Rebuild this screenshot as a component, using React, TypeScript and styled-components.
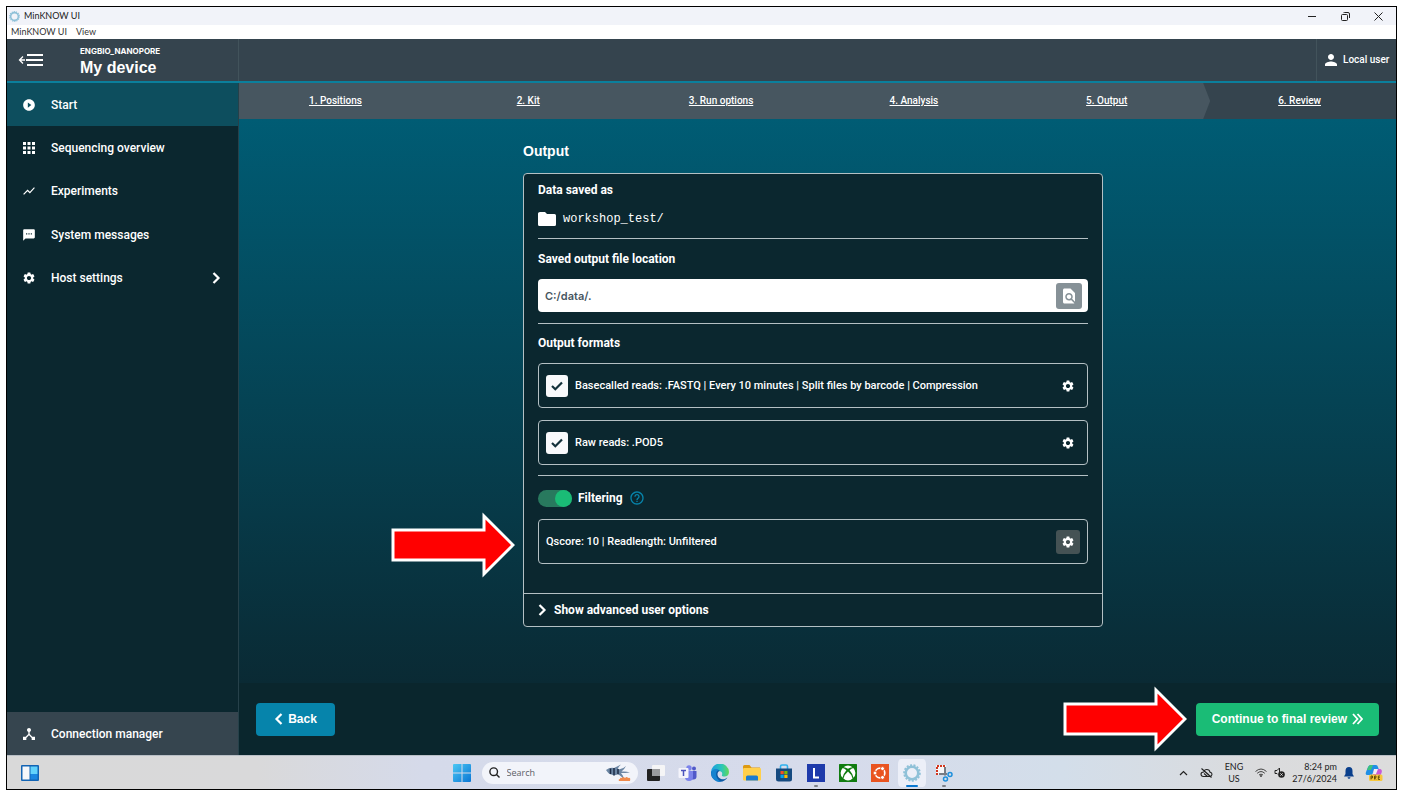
import React, { useState } from "react";
import styled, { createGlobalStyle } from "styled-components";
import {
  MdApps,
  MdDeviceHub,
  MdFindInPage,
  MdHelpOutline,
  MdPerson,
  MdPlayCircleFilled,
  MdSettings,
  MdShowChart,
  MdSms,
} from "react-icons/md";

const ui = 'Roboto, "Liberation Sans", sans-serif';
const bold = '"Liberation Sans", Arial, sans-serif';
const system = '"Open Sans", "Noto Sans", sans-serif';

const ink = "#0b272f";
const slate = "#35444e";
const line = "#b4c0c4";

const Global = createGlobalStyle`
  *, *::before, *::after { box-sizing: border-box; }
  body { margin: 0; background: #fff; font-family: ${ui}; color: #fff; }
  button, input { font: inherit; color: inherit; border: 0; padding: 0; margin: 0; background: none; }
  button { cursor: pointer; }
  a { color: inherit; }
  svg { display: block; flex: none; }
  h1, h2, p, ul { margin: 0; padding: 0; }
`;

const Page = styled.div`
  min-height: 100vh;
  padding: 6px 5px 0 6px;
  display: flex;
`;

const Window = styled.div`
  flex: 1;
  min-width: 0;
  display: flex;
  flex-direction: column;
  border: 1px solid #000;
`;

/* Window chrome */

const TitleBar = styled.header`
  height: 18px;
  display: flex;
  align-items: center;
  gap: 4px;
  padding-left: 2px;
  background: #f1f3f9;
  color: #222;
  font: 400 9px/12px Lato, ${system};
`;

const WindowButtons = styled.div`
  margin-left: auto;
  padding-right: 12px;
  display: flex;
  gap: 21px;
`;

const WindowButton = styled.button`
  width: 12px;
  height: 12px;
  display: grid;
  place-items: center;
`;

const MenuBar = styled.nav`
  height: 14px;
  display: flex;
  align-items: center;
  gap: 9px;
  padding-left: 4px;
  background: #fff;
  color: #333;
  font: 400 9px/12px Lato, ${system};
`;

/* Application */

const AppHeader = styled.header`
  height: 44px;
  display: flex;
  background: ${slate};
  border-bottom: 2px solid #0b7f9c;
`;

const Device = styled.div`
  width: 232px;
  display: flex;
  align-items: center;
  gap: 36px;
  padding-left: 11px;
  border-right: 1px solid #42535b;
`;

const DeviceHost = styled.p`
  margin-top: 2px;
  font: 700 8px/10px Inter, ${bold};
`;

const DeviceName = styled.h1`
  margin-top: 3px;
  font: 700 16px/18px ${bold};
`;

const UserButton = styled.button`
  margin-left: auto;
  width: 80px;
  display: flex;
  align-items: center;
  gap: 3px;
  padding-left: 5px;
  border-left: 1px solid #42535b;
  font: 500 10px/14px ${ui};
  white-space: nowrap;
`;

const Body = styled.div`
  flex: 1;
  display: flex;
`;

const Sidebar = styled.nav`
  width: 232px;
  display: flex;
  flex-direction: column;
  justify-content: space-between;
  background: ${ink};
  border-right: 1px solid #26414a;
`;

const NavList = styled.ul`
  list-style: none;
  height: 217px;
  display: grid;
  grid-auto-rows: 1fr;
`;

const NavLink = styled.a<{ $tone?: string }>`
  height: 100%;
  min-height: 43px;
  display: flex;
  align-items: center;
  gap: 15px;
  padding: 0 17px 0 15px;
  background: ${(p) => p.$tone ?? "transparent"};
  font: 500 12px/16px ${ui};
  text-decoration: none;
`;

const NavIcon = styled.span`
  width: 14px;
  display: grid;
  place-content: center;
`;

const NavText = styled.span`
  flex: 1;
`;

const Main = styled.main`
  flex: 1;
  min-width: 0;
  display: flex;
  flex-direction: column;
`;

const Steps = styled.ol`
  list-style: none;
  margin: 0;
  padding: 0;
  height: 36px;
  display: grid;
  grid-template-columns: repeat(6, 1fr);
  background: #475660;
`;

const Step = styled.li<{ $current?: boolean }>`
  display: grid;
  place-items: center;
  font: 500 10px/14px ${ui};
  background: ${(p) => (p.$current ? slate : "transparent")};
  clip-path: ${(p) => (p.$current ? "polygon(0 0, 100% 0, 100% 100%, 0 100%, 7px 50%)" : "none")};
`;

const Stage = styled.div`
  flex: 1;
  padding: 23px 9px 56px 0;
  background: linear-gradient(#005c74, #0a2a34);
`;

const Content = styled.div`
  width: 580px;
  max-width: 100%;
  margin: 0 auto;
`;

const PageTitle = styled.h2`
  font: 700 14px/18px ${bold};
`;

const Panel = styled.section`
  position: relative;
  margin-top: 13px;
  background: ${ink};
  border: 1px solid ${line};
  border-radius: 4px;
`;

const Group = styled.div<{ $top: number; $bottom: number }>`
  margin: 0 14px;
  padding: ${(p) => p.$top}px 0 ${(p) => p.$bottom}px;
  & + & { border-top: 1px solid ${line}; }
`;

const GroupTitle = styled.h2`
  display: block;
  font: 700 12px/16px ${ui};
`;

const FolderRow = styled.p`
  margin-top: 11px;
  height: 20px;
  display: flex;
  align-items: center;
  gap: 6px;
  font: 400 12px/16px "Liberation Mono", monospace;
`;

const PathField = styled.div`
  margin-top: 12px;
  height: 33px;
  display: flex;
  align-items: center;
  padding: 0 6px 0 7px;
  background: #fff;
  border-radius: 4px;
`;

const PathInput = styled.input`
  flex: 1;
  min-width: 0;
  color: #47565f;
  font: 600 11px/16px Inter, ${ui};
  outline: none;
`;

const BrowseButton = styled.button`
  width: 26px;
  height: 26px;
  display: grid;
  place-items: center;
  background: #869197;
  border-radius: 3px;
`;

const OptionBox = styled.div`
  margin-top: 12px;
  height: 45px;
  display: flex;
  align-items: center;
  gap: 7px;
  padding: 0 7px;
  border: 1px solid ${line};
  border-radius: 4px;
  font: 500 11px/16px ${ui};
`;

const OptionText = styled.label`
  flex: 1;
  white-space: nowrap;
`;

const CheckHolder = styled.span`
  display: grid;
  place-items: center;
  & > * { grid-area: 1 / 1; }
  & > svg { pointer-events: none; }
`;

const CheckInput = styled.input`
  appearance: none;
  width: 22px;
  height: 22px;
  background: #f8f9fb;
  border-radius: 3px;
`;

const GearButton = styled.button<{ $active?: boolean }>`
  width: 24px;
  height: 24px;
  display: grid;
  place-items: center;
  background: ${(p) => (p.$active ? "#455254" : "transparent")};
  border-radius: 3px;
`;

const FilterRow = styled.div`
  height: 18px;
  display: flex;
  align-items: center;
  gap: 6px;
  font: 700 12px/16px ${ui};
`;

const Switch = styled.input`
  appearance: none;
  width: 34px;
  height: 17px;
  display: flex;
  justify-content: flex-end;
  border-radius: 9px;
  background: #28795e;
  &:not(:checked) { justify-content: flex-start; background: #475660; }
  &::before {
    content: "";
    width: 17px;
    height: 17px;
    border-radius: 50%;
    background: #1abc76;
  }
`;

const HelpButton = styled.button`
  color: #0784ab;
`;

const AdvancedButton = styled.button`
  width: 100%;
  height: 33px;
  display: flex;
  align-items: center;
  gap: 7px;
  padding-left: 14px;
  border-top: 1px solid ${line};
  font: 700 12px/16px ${ui};
`;

const Footer = styled.footer`
  height: 72px;
  display: flex;
  justify-content: space-between;
  align-items: center;
  padding: 0 17px;
  background: #0a262d;
`;

const ActionButton = styled.button<{ $tone: string }>`
  position: relative;
  min-width: 79px;
  height: 33px;
  display: flex;
  align-items: center;
  justify-content: center;
  gap: 5px;
  padding: 0 16px;
  background: ${(p) => p.$tone};
  border-radius: 4px;
  font: 700 12px/16px ${bold};
`;

const Callout = styled.svg`
  position: absolute;
  right: calc(100% + 9px);
  pointer-events: none;
`;

const PanelCallout = styled(Callout)`
  top: 338px;
`;

const ButtonCallout = styled(Callout)`
  top: -17px;
`;

/* Taskbar */

const Taskbar = styled.footer`
  height: 34px;
  display: grid;
  grid-template-columns: 1fr auto 1fr;
  align-items: center;
  border-top: 1px solid #b9bfc6;
  background: linear-gradient(90deg, #d9d9d9 0, #d9d9da 18%, #d5daea 30%, #d6dbeb 60%, #d3deea 76%, #dadbdd 90%, #dcdcdc);
  color: #222;
  font: 400 9px/12px Lato, ${system};
`;

const WidgetSlot = styled.button`
  width: 46px;
  display: grid;
  place-items: center;
`;

const Dock = styled.div`
  display: flex;
  align-items: center;
`;

const DockButton = styled.button<{ $w?: number; $active?: boolean; $running?: boolean }>`
  position: relative;
  width: ${(p) => p.$w ?? 32}px;
  height: 28px;
  display: grid;
  place-items: center;
  background-clip: content-box;
  padding: 0 2px;
  border-radius: 5px;
  background-color: ${(p) => (p.$active ? "#eceff8" : "transparent")};
  &::after {
    content: "";
    display: ${(p) => (p.$active || p.$running ? "block" : "none")};
    position: absolute;
    bottom: 0;
    left: 50%;
    width: ${(p) => (p.$active ? 12 : 4)}px;
    height: 2px;
    border-radius: 1px;
    background: ${(p) => (p.$active ? "#0a78d0" : "#7c8088")};
    transform: translateX(-50%);
  }
`;

const SearchBox = styled.label`
  width: 156px;
  height: 22px;
  margin: 0 2px;
  display: flex;
  align-items: center;
  gap: 7px;
  padding: 0 5px 0 7px;
  background: #f2f4fa;
  border-radius: 11px;
`;

const SearchInput = styled.input`
  flex: 1;
  min-width: 0;
  font: 400 9px/14px ${system};
  outline: none;
  &::placeholder { color: #5c5f66; opacity: 1; }
`;

const Tray = styled.div`
  justify-self: end;
  display: flex;
  align-items: center;
  padding-right: 8px;
`;

const TrayButton = styled.button<{ $w: number }>`
  width: ${(p) => p.$w}px;
  height: 24px;
  display: grid;
  place-items: center;
`;

const TrayText = styled.div<{ $align: string; $w: number }>`
  width: ${(p) => p.$w}px;
  text-align: ${(p) => p.$align};
  white-space: nowrap;
`;

const Chevron = ({ flip = false }: { flip?: boolean }) => (
  <svg width="9" height="14" viewBox="0 0 9 14" fill="none" stroke="currentColor" strokeWidth="2.200">
    <path d={flip ? "M7.500 2 2.500 7l5 5" : "M1.500 2l5 5-5 5"} />
  </svg>
);

const Arrow = () => (
  <path d="M2 18H93V4L122 33 93 62V48H2Z" fill="#f00" stroke="#fff" strokeWidth="3" />
);

const Check = () => (
  <svg width="12" height="10" viewBox="0 0 12 10" fill="none" stroke="#12303a" strokeWidth="2.200">
    <path d="M1 5l3.300 3.200L11 1.400" />
  </svg>
);

const Ring = ({ size }: { size: number }) => (
  <svg width={size} height={size} viewBox="0 0 18 18" fill="none">
    <circle cx="9" cy="9" r="6.300" stroke="#8fc1d8" strokeWidth="2.600" />
    <circle cx="9" cy="9" r="7.900" stroke="#8fc1d8" strokeWidth="1.800" strokeDasharray="2 1.500" />
  </svg>
);

const navItems = [
  { label: "Start", icon: <MdPlayCircleFilled size={14} />, tone: "#0d4e5e" },
  { label: "Sequencing overview", icon: <MdApps size={18} /> },
  { label: "Experiments", icon: <MdShowChart size={14} /> },
  { label: "System messages", icon: <MdSms size={14} /> },
  { label: "Host settings", icon: <MdSettings size={14} />, more: true },
];

const steps = ["1. Positions", "2. Kit", "3. Run options", "4. Analysis", "5. Output", "6. Review"];

const formats = [
  { id: "fastq", text: "Basecalled reads: .FASTQ | Every 10 minutes | Split files by barcode | Compression" },
  { id: "pod5", text: "Raw reads: .POD5" },
];

function FormatOption({ id, text }: { id: string; text: string }) {
  const [on, setOn] = useState(true);
  return (
    <OptionBox>
      <CheckHolder>
        <CheckInput id={id} type="checkbox" checked={on} onChange={() => setOn(!on)} />
        {on && <Check />}
      </CheckHolder>
      <OptionText htmlFor={id}>{text}</OptionText>
      <GearButton aria-label="Edit format">
        <MdSettings size={14} />
      </GearButton>
    </OptionBox>
  );
}

function OutputPanel() {
  return (
    <Panel>
      <PanelCallout width="124" height="66" viewBox="0 0 124 66" aria-hidden="true">
        <Arrow />
      </PanelCallout>
      <Group $top={8} $bottom={9}>
        <GroupTitle>Data saved as</GroupTitle>
        <FolderRow>
          <svg width="19" height="16" viewBox="0 0 19 16" fill="#fff">
            <path d="M2 1h5l2 2h7.500q1.500 0 1.500 1.500v9q0 1.500-1.500 1.500h-15Q0 15 0 13.500v-11Q0 1 2 1z" />
          </svg>
          workshop_test/
        </FolderRow>
      </Group>
      <Group $top={12} $bottom={11}>
        <GroupTitle as="label" htmlFor="path">Saved output file location</GroupTitle>
        <PathField>
          <PathInput id="path" defaultValue="C:/data/." />
          <BrowseButton aria-label="Browse">
            <MdFindInPage size={18} />
          </BrowseButton>
        </PathField>
      </Group>
      <Group $top={11} $bottom={10}>
        <GroupTitle>Output formats</GroupTitle>
        {formats.map((f) => (
          <FormatOption key={f.id} {...f} />
        ))}
      </Group>
      <Group $top={13} $bottom={29}>
        <FilterRow>
          <Switch id="filtering" type="checkbox" role="switch" defaultChecked />
          <label htmlFor="filtering">Filtering</label>
          <HelpButton aria-label="About filtering">
            <MdHelpOutline size={16} />
          </HelpButton>
        </FilterRow>
        <OptionBox>
          <OptionText as="span">Qscore: 10 | Readlength: Unfiltered</OptionText>
          <GearButton $active aria-label="Edit filtering">
            <MdSettings size={14} />
          </GearButton>
        </OptionBox>
      </Group>
      <AdvancedButton>
        <Chevron />
        Show advanced user options
      </AdvancedButton>
    </Panel>
  );
}

const TaskViewIcon = () => (
  <svg width="18" height="18" viewBox="0 0 18 18">
    <rect x="5" y="1" width="13" height="11" rx="1" fill="#f5f5f6" />
    <rect x="0" y="5" width="13" height="12" rx="1" fill="#222" />
    <rect x="5" y="5" width="8" height="7" fill="#9a9b9e" />
  </svg>
);

const TeamsIcon = () => (
  <svg width="19" height="18" viewBox="0 0 19 18">
    <circle cx="11" cy="4" r="2.700" fill="#7b83eb" />
    <circle cx="16" cy="4.500" r="2" fill="#5059c9" />
    <path d="M13 7h5.500v5.500q0 3-3 3H13z" fill="#5059c9" />
    <path d="M7 7h8v6q0 4-4 4t-4-4z" fill="#7b83eb" />
    <rect x="0.500" y="4" width="10" height="10" rx="1" fill="#f4f4fb" />
    <path d="M3 6.500h5M5.500 6.500v5.500" stroke="#4b53bc" strokeWidth="1.500" />
  </svg>
);

const EdgeIcon = () => (
  <svg width="18" height="18" viewBox="0 0 18 18">
    <defs>
      <linearGradient id="edgeTop" x1="0" x2="1">
        <stop offset="0" stopColor="#1b9de2" />
        <stop offset="0.600" stopColor="#2cc5b8" />
        <stop offset="1" stopColor="#63d957" />
      </linearGradient>
    </defs>
    <path d="M0 9a9 9 0 0 1 18-1c0 3-2 4.500-4.500 4.500-1.500 0-3-.5-2.500-1.500C12 8.500 10 7 8 7 4 7 2 10 0 9z" fill="url(#edgeTop)" />
    <path d="M0 8.500C2 5 7 5 9 7c-3 0-4 6 1 8 3 1 5-.5 6.500-1.500A9 9 0 0 1 0 8.500z" fill="#0c59a4" />
    <path d="M0 9c1-4 5-5 8-3-4 1-4.500 8 2 11.900A9 9 0 0 1 0 9z" fill="#1583d0" />
  </svg>
);

const FilesIcon = () => (
  <svg width="18" height="16" viewBox="0 0 18 16">
    <path d="M0 1.500Q0 0 1.500 0h5L8.500 2.500H17V6H0z" fill="#dd9a12" />
    <rect x="0" y="3" width="18" height="12.500" rx="1.200" fill="#ffd04c" />
    <path d="M3 15.500V12q0-1.500 1.500-1.500h9Q15 10.500 15 12v3.500z" fill="#1a7bd0" />
  </svg>
);

const StoreIcon = () => (
  <svg width="18" height="18" viewBox="0 0 18 18">
    <path d="M5.500 5V2.500Q5.500 1 7 1h4q1.500 0 1.500 1.500V5" fill="none" stroke="#2fb1ee" strokeWidth="1.600" />
    <path d="M1 4.500h16V15q0 2.500-2.500 2.500h-11Q1 17.500 1 15z" fill="#164a80" />
    <rect x="5.500" y="7" width="3.200" height="3.200" fill="#f25022" />
    <rect x="9.300" y="7" width="3.200" height="3.200" fill="#7fba00" />
    <rect x="5.500" y="10.800" width="3.200" height="3.200" fill="#00a4ef" />
    <rect x="9.300" y="10.800" width="3.200" height="3.200" fill="#ffb900" />
  </svg>
);

const LIcon = () => (
  <svg width="18" height="18" viewBox="0 0 18 18">
    <rect width="18" height="18" fill="#1e3aab" />
    <path d="M7 4v9.500h5" fill="none" stroke="#fff" strokeWidth="2" />
  </svg>
);

const XboxIcon = () => (
  <svg width="18" height="18" viewBox="0 0 18 18">
    <rect width="18" height="18" rx="0.500" fill="#107c10" />
    <path d="M4.500 3.200Q6.500 1.600 9 1.600t4.500 1.600Q11.500 3 9 4.700 6.500 3 4.500 3.200z" fill="#fff" />
    <path d="M3.700 3.900Q5.500 4.200 7.400 6.200 4.400 9.500 3.500 13.800 1.600 11.700 1.600 9q0-3 2.100-5.100zM14.300 3.900Q12.500 4.200 10.600 6.200q3 3.300 3.900 7.600 1.900-2.100 1.900-4.800 0-3-2.100-5.100z" fill="#fff" />
    <path d="M9 7.500q3.500 2.800 4.600 7Q11.600 16.400 9 16.400T4.400 14.500Q5.500 10.300 9 7.500z" fill="#fff" />
  </svg>
);

const UbuntuIcon = () => (
  <svg width="18" height="18" viewBox="0 0 18 18">
    <rect width="18" height="18" fill="#e95420" />
    <circle cx="9" cy="9" r="4.800" fill="none" stroke="#fff" strokeWidth="1.700" />
    <g fill="#fff" stroke="#e95420" strokeWidth="1">
      <circle cx="4" cy="9" r="2" />
      <circle cx="11.500" cy="4.600" r="2" />
      <circle cx="11.500" cy="13.400" r="2" />
    </g>
  </svg>
);

const SnipIcon = () => (
  <svg width="18" height="18" viewBox="0 0 18 18">
    <rect x="1" y="1" width="10" height="10" fill="#f6f6f8" />
    <path d="M2 11V2h9" fill="none" stroke="#d2371f" strokeWidth="2" strokeDasharray="2 1" />
    <path d="M10 3v8.500M4 10h8" stroke="#777c84" strokeWidth="2" />
    <circle cx="15" cy="10.500" r="2" fill="none" stroke="#1e90dc" strokeWidth="1.500" />
    <circle cx="10.500" cy="15" r="2" fill="none" stroke="#1e90dc" strokeWidth="1.500" />
  </svg>
);

const FishIcon = () => (
  <svg width="28" height="18" viewBox="0 0 28 18">
    <path d="M1 6Q5 3 9 4L16 0.500Q13 3 13 5q4 1 8-3-2 4-4.500 5.500Q21 7 25 8.500q-5 .5-9 .5 3 3 3 7-3-5-6.500-5.500Q9 12 6.500 10.500 4 10.500 1 6z" fill="#6c86a3" />
    <path d="M5.500 4.500v5.500M9 4v7.500M13 5v5" stroke="#1d2d48" strokeWidth="1.500" />
    <path d="M14 17q-1-2 1-2 0-2 2-1 1-2 3 0 2-2 3 0 3-1 2 3z" fill="#f08a4c" />
  </svg>
);

const dock = [
  { name: "Task view", icon: <TaskViewIcon /> },
  { name: "Teams", icon: <TeamsIcon /> },
  { name: "Edge", icon: <EdgeIcon /> },
  { name: "Files", icon: <FilesIcon /> },
  { name: "Store", icon: <StoreIcon /> },
  { name: "L", icon: <LIcon />, running: true },
  { name: "Xbox", icon: <XboxIcon /> },
  { name: "Ubuntu", icon: <UbuntuIcon /> },
  { name: "MinKNOW", icon: <Ring size={18} />, active: true },
  { name: "Snipping tool", icon: <SnipIcon />, running: true },
];

function TaskbarArea() {
  return (
    <Taskbar>
      <WidgetSlot aria-label="Widgets">
        <svg width="18" height="16" viewBox="0 0 18 16">
          <rect width="18" height="16" rx="1" fill="#1264b4" />
          <rect x="1.500" y="1.500" width="7" height="13" fill="#f5f7fa" />
          <rect x="9.500" y="1.500" width="7" height="7.500" fill="#62d2fb" />
          <rect x="9.500" y="9" width="7" height="5.500" fill="#1a86e0" />
        </svg>
      </WidgetSlot>
      <Dock>
        <DockButton $w={36} aria-label="Start menu">
          <svg width="18" height="18" viewBox="0 0 18 18">
            <defs>
              <linearGradient id="win" x1="0" y1="0" x2="1" y2="1">
                <stop offset="0" stopColor="#4cc8f4" />
                <stop offset="1" stopColor="#0a76d4" />
              </linearGradient>
            </defs>
            <path d="M0 1q0-1 1-1h7.500v8.500H0zM9.500 0H17q1 0 1 1v7.500H9.500zM0 9.500h8.500V18H1q-1 0-1-1zM9.500 9.500H18V17q0 1-1 1H9.500z" fill="url(#win)" />
          </svg>
        </DockButton>
        <SearchBox>
          <svg width="11" height="11" viewBox="0 0 11 11" fill="none" stroke="#222" strokeWidth="1.400">
            <circle cx="4.700" cy="4.700" r="3.800" />
            <path d="M7.500 7.500l3 3" />
          </svg>
          <SearchInput placeholder="Search" aria-label="Search" />
          <FishIcon />
        </SearchBox>
        {dock.map((d) => (
          <DockButton key={d.name} aria-label={d.name} $active={d.active} $running={d.running}>
            {d.icon}
          </DockButton>
        ))}
      </Dock>
      <Tray>
        <TrayButton $w={20} aria-label="Hidden icons">
          <svg width="9" height="6" viewBox="0 0 9 6" fill="none" stroke="#222" strokeWidth="1.200">
            <path d="M1 5l3.500-3.500L8 5" />
          </svg>
        </TrayButton>
        <TrayButton $w={27} aria-label="Cloud storage">
          <svg width="13" height="10" viewBox="0 0 13 10" fill="none" stroke="#222" strokeWidth="1.100">
            <path d="M3.500 8.500H10q2-.3 2-2.200T10 4.200Q9.500 1.500 6.800 1.500 4.300 1.500 3.600 4 1 4 1 6.300q0 2 2.500 2.200zM1.500.5l10 9M4 5.500l3.500 3M5.500 4l3.500 3" />
          </svg>
        </TrayButton>
        <TrayText $align="center" $w={28}>
          ENG
          <br />
          US
        </TrayText>
        <TrayButton $w={26} aria-label="Network">
          <svg width="12" height="9" viewBox="0 0 12 9" fill="none" stroke="#444" strokeWidth="1">
            <path d="M.5 3.500q5.500-5 11 0M2.200 5.300q3.800-3.500 7.600 0M4 7q2-1.800 4 0" />
            <circle cx="6" cy="8" r="0.600" fill="#222" />
          </svg>
        </TrayButton>
        <TrayButton $w={11} aria-label="Sound">
          <svg width="11" height="11" viewBox="0 0 11 11">
            <path d="M5.500 5V1L3 3.500H1v3h2l1 1" fill="none" stroke="#222" />
            <circle cx="7.500" cy="7.500" r="3.300" fill="#222" />
            <path d="M6.300 6.300l2.400 2.400M8.700 6.300L6.300 8.700" stroke="#eee" strokeWidth="0.800" />
          </svg>
        </TrayButton>
        <TrayText $align="right" $w={52}>
          8:24 pm
          <br />
          27/6/2024
        </TrayText>
        <TrayButton $w={23} aria-label="Notifications">
          <svg width="10" height="12" viewBox="0 0 10 12" fill="#0a3f8c">
            <path d="M5 0q3.500.2 3.500 4v3L10 9.500H0L1.500 7V4Q1.500.2 5 0zM3.500 10.300h3Q6.300 11.800 5 11.800T3.500 10.300z" />
          </svg>
        </TrayButton>
        <TrayButton $w={28} aria-label="Copilot">
          <svg width="18" height="18" viewBox="0 0 18 18">
            <path d="M6 1h5q1.500 0 2 2l1 3H9L7 11H2Q0 10.500 1 8l2-5q.8-2 3-2z" fill="#1f8fe6" />
            <path d="M2 6l1.200-3Q4 1 6 1h2L6 6z" fill="#3fc27a" />
            <path d="M9 5h6q2.200.3 1.800 3L15 13q-.7 2-3 2H6q1 0 1.500-2z" fill="#c75ad8" />
            <path d="M9 5h4l-2 5H8z" fill="#f0f0f5" />
            <rect x="4" y="10.500" width="13.500" height="6.500" rx="1.500" fill="#f8c73c" />
            <path d="M6 15.500V12h1.500v2H6M9.500 15.500V12H11v1.700H9.500l1.500 1.800M15 12h-1.700v3.500H15M13.300 13.700h1.500" fill="none" stroke="#4d3b00" strokeWidth="0.800" />
          </svg>
        </TrayButton>
      </Tray>
    </Taskbar>
  );
}

export default function App() {
  return (
    <Page>
      <Global />
      <Window>
        <TitleBar>
          <Ring size={11} />
          MinKNOW UI
          <WindowButtons>
            <WindowButton aria-label="Minimise">
              <svg width="8" height="8" stroke="#222"><path d="M0 4.500h8" /></svg>
            </WindowButton>
            <WindowButton aria-label="Restore">
              <svg width="9" height="9" fill="none" stroke="#222">
                <rect x="0.500" y="2.500" width="6" height="6" rx="1" />
                <path d="M2.500 1q0-.5 1-.5H7q1.500 0 1.500 1.500v4" />
              </svg>
            </WindowButton>
            <WindowButton aria-label="Close">
              <svg width="9" height="9" stroke="#222"><path d="M.5.5l8 8M8.500.5l-8 8" /></svg>
            </WindowButton>
          </WindowButtons>
        </TitleBar>
        <MenuBar>
          <span>MinKNOW UI</span>
          <span>View</span>
        </MenuBar>
        <AppHeader>
          <Device>
            <button aria-label="Collapse menu">
              <svg width="26" height="14" viewBox="0 0 26 14" fill="none" stroke="#fff">
                <path d="M9 2h16M8 7h17M9 12h16" strokeWidth="2" />
                <path d="M7 7H2M5 3.500L1.500 7 5 10.500" strokeWidth="1.300" />
              </svg>
            </button>
            <div>
              <DeviceHost>ENGBIO_NANOPORE</DeviceHost>
              <DeviceName>My device</DeviceName>
            </div>
          </Device>
          <UserButton>
            <MdPerson size={18} />
            Local user
          </UserButton>
        </AppHeader>
        <Body>
          <Sidebar>
            <NavList>
              {navItems.map((n) => (
                <li key={n.label}>
                  <NavLink href="#" $tone={n.tone}>
                    <NavIcon>{n.icon}</NavIcon>
                    <NavText>{n.label}</NavText>
                    {n.more && <Chevron />}
                  </NavLink>
                </li>
              ))}
            </NavList>
            <div>
              <NavLink href="#" $tone="#36454f">
                <NavIcon><MdDeviceHub size={16} /></NavIcon>
                <NavText>Connection manager</NavText>
              </NavLink>
            </div>
          </Sidebar>
          <Main>
            <Steps>
              {steps.map((s, i) => (
                <Step key={s} $current={i === steps.length - 1}>
                  <a href="#">{s}</a>
                </Step>
              ))}
            </Steps>
            <Stage>
              <Content>
                <PageTitle>Output</PageTitle>
                <OutputPanel />
              </Content>
            </Stage>
            <Footer>
              <ActionButton $tone="#0684ab">
                <Chevron flip />
                Back
              </ActionButton>
              <ActionButton $tone="#1abc76">
                <ButtonCallout width="124" height="66" viewBox="0 0 124 66" aria-hidden="true">
                  <Arrow />
                </ButtonCallout>
                Continue to final review
                <svg width="11" height="12" viewBox="0 0 11 12" fill="none" stroke="#fff" strokeWidth="1.800">
                  <path d="M1 1l4.500 5L1 11M5.500 1L10 6l-4.500 5" />
                </svg>
              </ActionButton>
            </Footer>
          </Main>
        </Body>
        <TaskbarArea />
      </Window>
    </Page>
  );
}
